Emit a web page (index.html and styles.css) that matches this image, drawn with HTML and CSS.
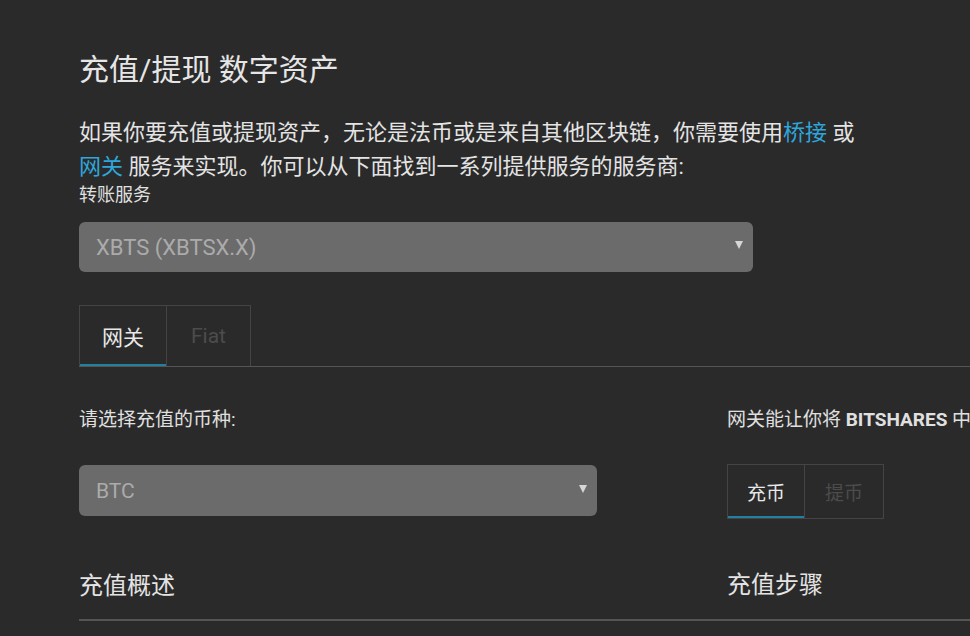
FILE: index.html
```html
<!DOCTYPE html>
<html lang="zh-CN">
<head>
<meta charset="utf-8">
<title>充值/提现 数字资产</title>
<link rel="stylesheet" href="styles.css">
</head>
<body>
<div class="page">
  <h1 class="title">充值/提现 数字资产</h1>
  <p class="intro">如果你要充值或提现资产，无论是法币或是来自其他区块链，你需要使用<a class="link" href="#">桥接</a> 或 <a class="link" href="#">网关</a> 服务来实现。你可以从下面找到一系列提供服务的服务商:</p>
  <div class="label">转账服务</div>
  <div class="select select-wide">
    <span class="select-value">XBTS (XBTSX.X)</span>
    <span class="caret"></span>
  </div>

  <div class="tabbar">
    <div class="tab tab-active">网关</div>
    <div class="tab tab-dim">Fiat</div>
  </div>

  <div class="columns">
    <div class="col">
      <div class="col-label">请选择充值的币种:</div>
      <div class="select select-coin">
        <span class="select-value">BTC</span>
        <span class="caret"></span>
      </div>
      <h2 class="section-title">充值概述</h2>
    </div>
    <div class="col">
      <div class="col-label nowrap">网关能让你将 <b>BITSHARES</b> 中的资产转移到其他区块链或交易所</div>
      <div class="subtabs">
        <div class="subtab subtab-active">充币</div>
        <div class="subtab subtab-dim">提币</div>
      </div>
      <h2 class="section-title section-title-right">充值步骤</h2>
    </div>
  </div>
  <div class="rule"></div>
</div>
</body>
</html>
```

FILE: styles.css
```css
html, body {
  margin: 0;
  padding: 0;
  background: #2a2a2a;
  overflow: hidden;
}

body {
  color: #e2e2e2;
  font-family: Roboto, "Noto Sans CJK SC", sans-serif;
}

.page {
  width: 1300px;
  padding: 50px 0 0 79px;
}

.title {
  margin: 0;
  font-size: 30px;
  font-weight: 400;
  line-height: 40px;
  color: #e6e6e6;
}

.intro {
  margin: 26px 0 0;
  width: 785px;
  font-size: 22px;
  line-height: 34px;
  color: #e4e4e4;
}

.link {
  color: #2fa6dc;
  text-decoration: none;
}

.label {
  font-size: 18px;
  line-height: 22px;
  color: #e0e0e0;
}

.select {
  display: flex;
  align-items: center;
  justify-content: space-between;
  box-sizing: border-box;
  background: #6b6b6b;
  border-radius: 6px;
  padding: 0 10px 0 17px;
  color: #ababab;
  font-size: 21px;
}

.select-wide {
  margin-top: 16px;
  width: 674px;
  height: 50px;
  font-size: 22px;
}

.select-coin {
  margin-top: 33px;
  width: 518px;
  height: 51px;
}

.caret {
  width: 0;
  height: 0;
  border-left: 4px solid transparent;
  border-right: 4px solid transparent;
  border-top: 8px solid #d6d6d6;
  margin-top: -4px;
}

.tabbar {
  display: flex;
  margin-top: 33px;
  border-bottom: 1px solid #555;
}

.tab {
  box-sizing: border-box;
  height: 61px;
  display: flex;
  align-items: center;
  justify-content: center;
  border: 1px solid #444;
  border-bottom: none;
  font-size: 21px;
}

.tab + .tab {
  border-left: none;
}

.tab-active {
  width: 88px;
  color: #e8e8e8;
  box-shadow: inset 0 -2px 0 #217fa0;
}

.tab-dim {
  width: 84px;
  color: #4c4c4c;
}

.columns {
  display: grid;
  grid-template-columns: 648px 648px;
}

.col-label {
  margin-top: 41px;
  font-size: 19px;
  line-height: 24px;
  color: #e0e0e0;
}

.nowrap {
  white-space: nowrap;
}

.col-label b {
  font-weight: 700;
}

.subtabs {
  display: flex;
  margin-top: 32px;
}

.subtab {
  box-sizing: border-box;
  height: 55px;
  width: 79px;
  display: flex;
  align-items: center;
  justify-content: center;
  border: 1px solid #444;
  font-size: 19px;
}

.subtab + .subtab {
  border-left: none;
}

.subtab-active {
  width: 78px;
  color: #e8e8e8;
  box-shadow: inset 0 -2px 0 #217fa0;
}

.subtab-dim {
  color: #4c4c4c;
}

.section-title {
  margin: 54px 0 0;
  font-size: 24px;
  font-weight: 400;
  line-height: 32px;
  color: #e4e4e4;
}

.section-title-right {
  margin-top: 50px;
}

.rule {
  margin-top: 17px;
  height: 2px;
  background: #555;
}
```
